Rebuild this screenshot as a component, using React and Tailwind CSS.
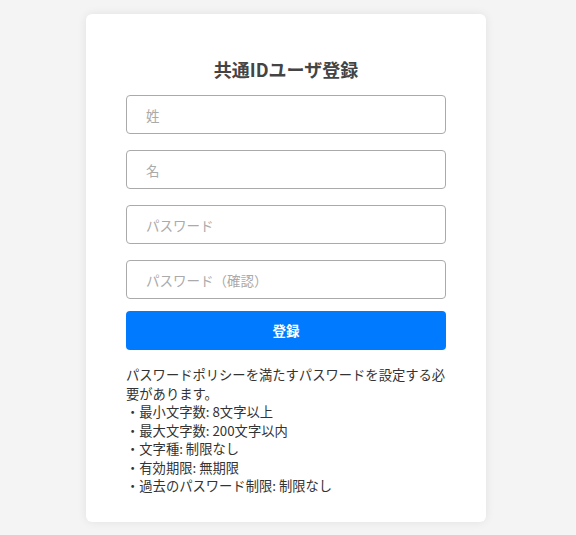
export default function App() {
  const rules = [
    "最小文字数: 8文字以上",
    "最大文字数: 200文字以内",
    "文字種: 制限なし",
    "有効期限: 無期限",
    "過去のパスワード制限: 制限なし",
  ];

  return (
    <div
      className="flex min-h-[535px] justify-center bg-[#f4f4f4] pt-[14px] pr-[4px]"
      style={{ fontFamily: '"Noto Sans CJK JP", "Noto Sans", sans-serif' }}
    >
      <div className="h-fit w-[400px] rounded-md bg-white px-10 pt-[42px] pb-[26px] shadow-[0_0_10px_rgba(0,0,0,0.08)]">
        <h1 className="mb-3 text-center text-[18px] leading-[27px] font-bold text-[#444]">共通IDユーザ登録</h1>

        <div className="flex flex-col gap-4">
          {["姓", "名", "パスワード", "パスワード（確認）"].map((p) => (
            <input
              key={p}
              placeholder={p}
              type="text"
              className="h-[39px] w-full rounded-[4px] border border-[#aaa] px-[19px] text-[13.5px] text-[#333] placeholder:text-[#aaa] outline-none"
            />
          ))}
        </div>
        <button className="mt-3 h-[39px] w-full rounded-[4px] bg-[#007bff] text-[13.5px] font-bold text-white">登録</button>

        <div className="mt-4 text-[13.3px] leading-[18.5px] text-[#333]">
          <p>パスワードポリシーを満たすパスワードを設定する必要があります。</p>
          {rules.map((r) => (
            <p key={r}>・{r}</p>
          ))}
        </div>
      </div>
    </div>
  );
}
